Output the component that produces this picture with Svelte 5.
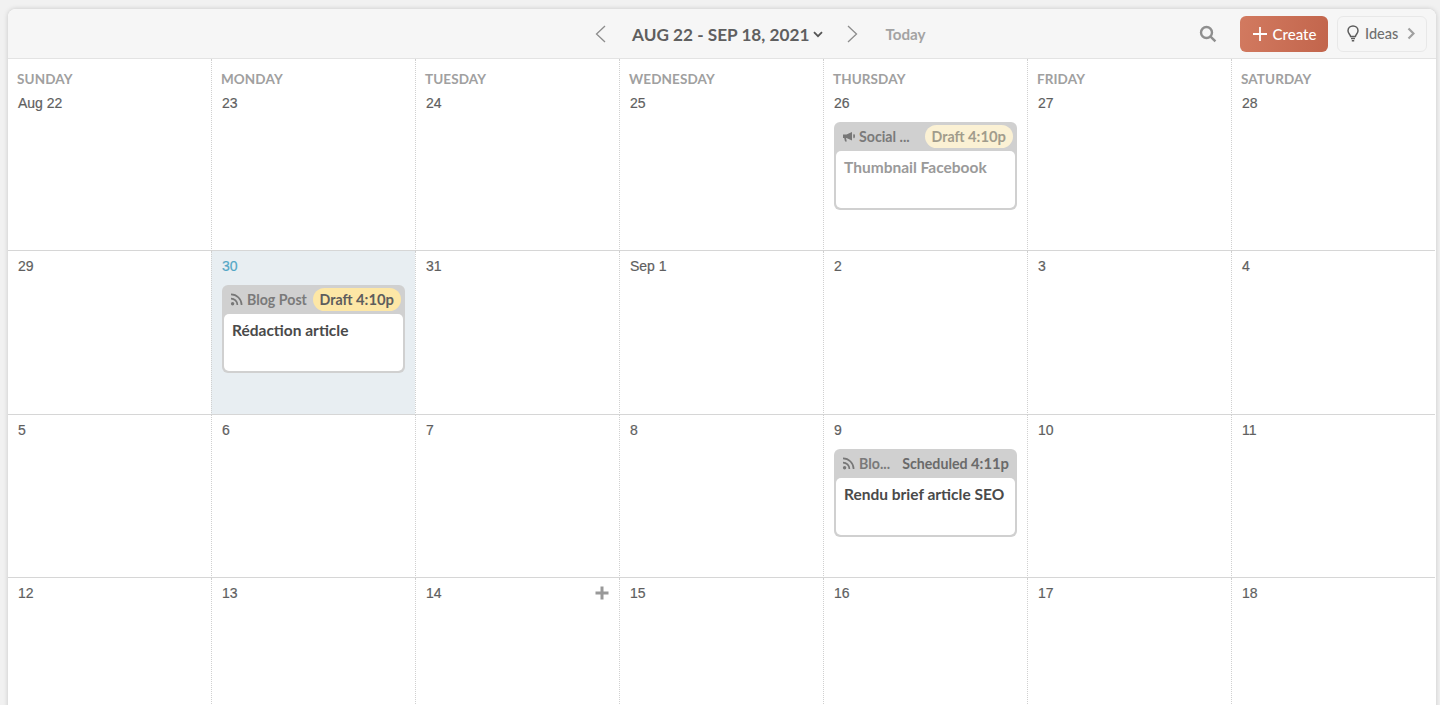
<script>
	const dayNames = ['Sunday', 'Monday', 'Tuesday', 'Wednesday', 'Thursday', 'Friday', 'Saturday'];

	const weeks = [
		['Aug 22', '23', '24', '25', '26', '27', '28'],
		['29', '30', '31', 'Sep 1', '2', '3', '4'],
		['5', '6', '7', '8', '9', '10', '11'],
		['12', '13', '14', '15', '16', '17', '18']
	];

	const events = {
		'26': { icon: 'social', type: 'Social ...', status: 'Draft', time: '4:10p', title: 'Thumbnail Facebook', faded: true },
		'30': { icon: 'rss', type: 'Blog Post', status: 'Draft', time: '4:10p', title: 'Rédaction article' },
		'9': { icon: 'rss', type: 'Blo...', status: 'Scheduled', time: '4:11p', title: 'Rendu brief article SEO', plain: true }
	};
</script>

<div class="page">
	<div class="calendar">
		<header class="topbar">
			<div class="range">
				<svg class="arrow" width="14" height="20" viewBox="0 0 14 20"><path d="M12 2 3.5 10 12 18" /></svg>
				<span class="range-label">AUG 22 - SEP 18, 2021</span>
				<svg class="caret" width="10" height="7" viewBox="0 0 10 7"><path d="M1 1.2 5 5.2 9 1.2" /></svg>
				<svg class="arrow next" width="14" height="20" viewBox="0 0 14 20"><path d="M2 2 10.5 10 2 18" /></svg>
				<span class="today">Today</span>
			</div>
			<div class="actions">
				<svg class="search" width="18" height="18" viewBox="0 0 18 18"><circle cx="7.5" cy="7.5" r="5.5" /><path d="M11.6 11.6 16.4 16.4" /></svg>
				<button class="create">
					<svg width="16" height="16" viewBox="0 0 16 16"><path d="M8 1v14M1 8h14" /></svg>
					Create
				</button>
				<button class="ideas">
					<svg class="bulb" width="12" height="17" viewBox="0 0 12 17"><path d="M3.6 11.5C3.4 9.6 1 8.4 1 5.7 1 3 3.2 1 6 1s5 2 5 4.700c0 2.700-2.400 3.900-2.600 5.800z" /><path d="M4 13.600h4M4.800 15.700h2.400" /></svg>
					Ideas
					<svg class="chev" width="8" height="13" viewBox="0 0 8 13"><path d="M1.500 1.500 6.500 6.500 1.500 11.500" /></svg>
				</button>
			</div>
		</header>

		<div class="grid">
			{#each weeks as week, w}
				{#each week as date, d}
					<div class="cell" class:today-cell={date === '30'}>
						{#if w === 0}
							<div class="day-name">{dayNames[d]}</div>
						{/if}
						<div class="date">{date}</div>
						{#if date === '14'}
							<svg class="add" width="14" height="14" viewBox="0 0 14 14"><path d="M7 .5v13M.5 7h13" /></svg>
						{/if}
						{#if events[date]}
							{@const ev = events[date]}
							<div class="event" class:faded={ev.faded}>
								<div class="event-head">
									{#if ev.icon === 'rss'}
										<svg class="ev-icon" width="14" height="13" viewBox="0 0 14 13"><circle cx="2.600" cy="10.800" r="1.700" fill="#777" /><path d="M1 5.600a6.400 6.400 0 0 1 6.400 6.400M1 1.400a10.600 10.600 0 0 1 10.600 10.600" /></svg>
									{:else}
										<svg class="ev-icon" width="14" height="13" viewBox="0 0 14 13"><path class="solid" d="M1 4.500h3.500L10 2v8.500L4.500 8H4l.8 3.500H3L2.200 8H1z" /><path d="M11.500 4.500c.9.500.9 2.700 0 3.300" /></svg>
									{/if}
									<span class="ev-type">{ev.type}</span>
									<span class="ev-status" class:plain={ev.plain}>{ev.status} <b>{ev.time}</b></span>
								</div>
								<div class="event-body">{ev.title}</div>
							</div>
						{/if}
					</div>
				{/each}
			{/each}
		</div>
	</div>
</div>

<style>
	:global(body) {
		background: #f1f1f1;
	}
	.page {
		height: 705px;
		overflow: hidden;
		padding: 9px 4px 0 8px;
		box-sizing: border-box;
		font-family: Lato, 'Open Sans', sans-serif;
	}
	.calendar {
		background: #fff;
		border-radius: 8px 8px 0 0;
		box-shadow: 0 0 5px rgba(0, 0, 0, 0.18);
		height: 720px;
		overflow: hidden;
	}
	.topbar {
		height: 50px;
		background: #f6f6f6;
		border-bottom: 1px solid #e3e3e3;
		box-sizing: border-box;
		position: relative;
		display: flex;
		align-items: center;
		justify-content: flex-end;
		padding-right: 9px;
	}
	.range {
		position: absolute;
		left: 585px;
		top: 1px;
		height: 48px;
		display: flex;
		align-items: center;
	}
	.arrow path {
		fill: none;
		stroke: #8d8d8d;
		stroke-width: 1.3;
	}
	.range-label {
		margin-left: 25px;
		font-size: 17.200px;
		font-weight: 700;
		color: #5f5f5f;
		white-space: nowrap;
	}
	.caret {
		margin-left: 4px;
	}
	.caret path {
		fill: none;
		stroke: #555;
		stroke-width: 1.800;
	}
	.arrow.next {
		margin-left: 23px;
	}
	.today {
		margin-left: 25px;
		font-size: 15.200px;
		font-weight: 700;
		color: #a3a3a3;
	}
	.actions {
		display: flex;
		align-items: center;
	}
	.search {
		margin-right: 23px;
	}
	.search circle,
	.search path {
		fill: none;
		stroke: #8f8f8f;
		stroke-width: 2.400;
	}
	.create {
		width: 88px;
		height: 36px;
		border: none;
		border-radius: 6px;
		background: linear-gradient(100deg, #d27a60, #c2654c);
		color: #fff;
		font: 500 15px Lato, sans-serif;
		display: flex;
		align-items: center;
		justify-content: center;
		gap: 5px;
		padding: 0;
	}
	.create svg path {
		stroke: #fff;
		stroke-width: 1.800;
		fill: none;
	}
	.ideas {
		width: 90px;
		height: 36px;
		margin-left: 9px;
		border: 1px solid #e8e8e8;
		border-radius: 6px;
		background: #f6f6f6;
		color: #6f6f6f;
		font: 500 14.500px Lato, sans-serif;
		display: flex;
		align-items: center;
		gap: 6px;
		padding: 0 0 0 9px;
		box-sizing: border-box;
	}
	.ideas .chev {
		margin-left: 3px;
	}
	.bulb path {
		fill: none;
		stroke: #5c5c5c;
		stroke-width: 1.500;
	}
	.chev path {
		fill: none;
		stroke: #a0a0a0;
		stroke-width: 2.200;
	}
	.grid {
		display: grid;
		grid-template-columns: 203px repeat(6, 204px);
		grid-template-rows: 192px 164px 163px 140px;
	}
	.cell {
		position: relative;
		box-sizing: border-box;
		padding: 8px 10px 0 10px;
		border-left: 1px dotted #d0d0d0;
		border-bottom: 1px solid #d6d6d6;
	}
	.cell:nth-child(7n + 1) {
		border-left: none;
		padding-left: 10px;
	}
	.cell:nth-child(-n + 7) {
		padding-top: 12px;
	}
	.today-cell {
		background: #e8eef2;
	}
	.today-cell .date {
		color: #54a7c6;
		-webkit-text-stroke: 0.2px #54a7c6;
	}
	.day-name {
		font-size: 13.500px;
		font-weight: 700;
		color: #a0a0a0;
		line-height: 16px;
		text-transform: uppercase;
		margin: 0 0 9px -1px;
		letter-spacing: 0.1px;
	}
	.date {
		font-family: 'Liberation Sans', Arial, sans-serif;
		font-size: 14px;
		line-height: 15px;
		color: #5f5f5f;
		-webkit-text-stroke: 0.2px #5f5f5f;
	}
	.add {
		position: absolute;
		top: 8px;
		right: 10px;
	}
	.add path {
		stroke: #999;
		stroke-width: 3;
		fill: none;
	}
	.event {
		margin-top: 11px;
		width: 183px;
		height: 88px;
		background: #d0d0d0;
		border-radius: 6px;
		box-sizing: border-box;
		padding: 0 2px 2px;
		display: flex;
		flex-direction: column;
	}
	.event-head {
		height: 29px;
		flex: none;
		display: flex;
		align-items: center;
		padding: 0 4px 0 6px;
		font-size: 14.200px;
		font-weight: 700;
		color: #7a7a7a;
		white-space: nowrap;
	}
	.ev-icon {
		flex: none;
		margin-right: 3px;
	}
	.ev-icon path {
		fill: none;
		stroke: #777;
		stroke-width: 1.700;
	}
	.ev-icon path.solid {
		fill: #777;
		stroke: none;
	}
	.ev-type {
		flex: 1;
	}
	.ev-status {
		background: #fde7a6;
		color: #5d5d5d;
		height: 23px;
		line-height: 23px;
		border-radius: 12px;
		padding: 0 7px;
		margin-right: -2px;
	}
	.ev-status b {
		font-size: 14.800px;
		font-weight: 700;
	}
	.ev-status.plain {
		background: none;
		padding: 0 2px 0 0;
		color: #6a6a6a;
		margin-right: 0;
	}
	.event-body {
		flex: 1;
		background: #fff;
		border-radius: 5px;
		padding: 7px 8px;
		font-size: 15.500px;
		font-weight: 700;
		color: #4a4a4a;
		line-height: 18px;
		white-space: nowrap;
	}
	.event.faded .event-body {
		color: #9a9a9a;
	}
	.event.faded .ev-status {
		background: #fbf1d4;
		color: #a19c8c;
	}
</style>
